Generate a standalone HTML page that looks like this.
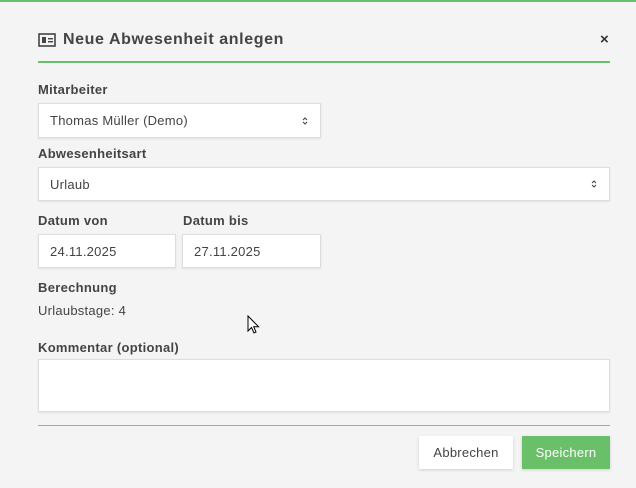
<!DOCTYPE html>
<html><head><style>
*{box-sizing:border-box;margin:0;padding:0}
body{width:636px;height:488px;background:#f4f4f4;font-family:"Liberation Sans",sans-serif;position:relative;overflow:hidden;color:#444}
.a{position:absolute}
.lbl{position:absolute;font-size:13px;font-weight:bold;color:#444;left:38px;letter-spacing:.3px}
.in{position:absolute;background:#fff;border:1px solid #ddd;box-shadow:0 1px 2px rgba(0,0,0,.08);font-size:13px;color:#444;padding-left:11px;display:flex;align-items:center;letter-spacing:.25px}
.ar{position:absolute;right:12px;top:50%;margin-top:-5px}
</style></head><body>
<div class="a" style="left:0;top:0;width:636px;height:2px;background:#6abf69"></div>
<svg class="a" style="left:38px;top:33px" width="18" height="14" viewBox="0 0 18 14"><rect x="1" y="1" width="16" height="12" fill="none" stroke="#444" stroke-width="1.6"/><rect x="4" y="4" width="4" height="6" fill="#444"/><rect x="10" y="5" width="5" height="1.4" fill="#444"/><rect x="10" y="8" width="5" height="1.4" fill="#444"/></svg>
<div class="a" style="left:63px;top:31px;font-size:16px;font-weight:bold;color:#444;letter-spacing:.6px">Neue Abwesenheit anlegen</div>
<div class="a" style="left:600px;top:31px;font-size:15px;font-weight:bold;color:#333">×</div>
<div class="a" style="left:38px;top:61px;width:572px;height:2px;background:#6abf69"></div>
<div class="lbl" style="top:82px">Mitarbeiter</div>
<div class="in" style="left:38px;top:103px;width:283px;height:35px">Thomas Müller (Demo)<svg class="ar" width="6" height="10" viewBox="0 0 6 10"><path d="M1 4 L3 2 L5 4 M1 6 L3 8 L5 6" fill="none" stroke="#444" stroke-width="1.1"/></svg></div>
<div class="lbl" style="top:146px">Abwesenheitsart</div>
<div class="in" style="left:38px;top:167px;width:572px;height:34px">Urlaub<svg class="ar" width="6" height="10" viewBox="0 0 6 10"><path d="M1 4 L3 2 L5 4 M1 6 L3 8 L5 6" fill="none" stroke="#444" stroke-width="1.1"/></svg></div>
<div class="lbl" style="top:213px">Datum von</div>
<div class="lbl" style="top:213px;left:183px">Datum bis</div>
<div class="in" style="left:38px;top:234px;width:138px;height:34px">24.11.2025</div>
<div class="in" style="left:182px;top:234px;width:139px;height:34px">27.11.2025</div>
<div class="lbl" style="top:280px">Berechnung</div>
<div class="a" style="left:38px;top:303px;font-size:13px;color:#444;letter-spacing:.25px">Urlaubstage: 4</div>
<svg class="a" style="left:247px;top:315px" width="13" height="20" viewBox="0 0 13 20"><path d="M1 1 L1 16 L4.5 12.5 L7 18 L9 17 L6.7 11.7 L11.5 11.7 Z" fill="#fff" stroke="#000" stroke-width="1"/></svg>
<div class="lbl" style="top:340px">Kommentar (optional)</div>
<div class="in" style="left:38px;top:359px;width:572px;height:53px"></div>
<div class="a" style="left:38px;top:425px;width:572px;height:0;border-top:1px solid #7cc47b"></div>
<div class="in" style="left:419px;top:436px;width:94px;height:33px;justify-content:center;padding:0;border:none;box-shadow:0 1px 3px rgba(0,0,0,.15)">Abbrechen</div>
<div class="in" style="left:522px;top:436px;width:88px;height:33px;justify-content:center;padding:0;border:none;background:#6abf69;color:#fff;box-shadow:0 1px 3px rgba(0,0,0,.15)">Speichern</div>
</body></html>
